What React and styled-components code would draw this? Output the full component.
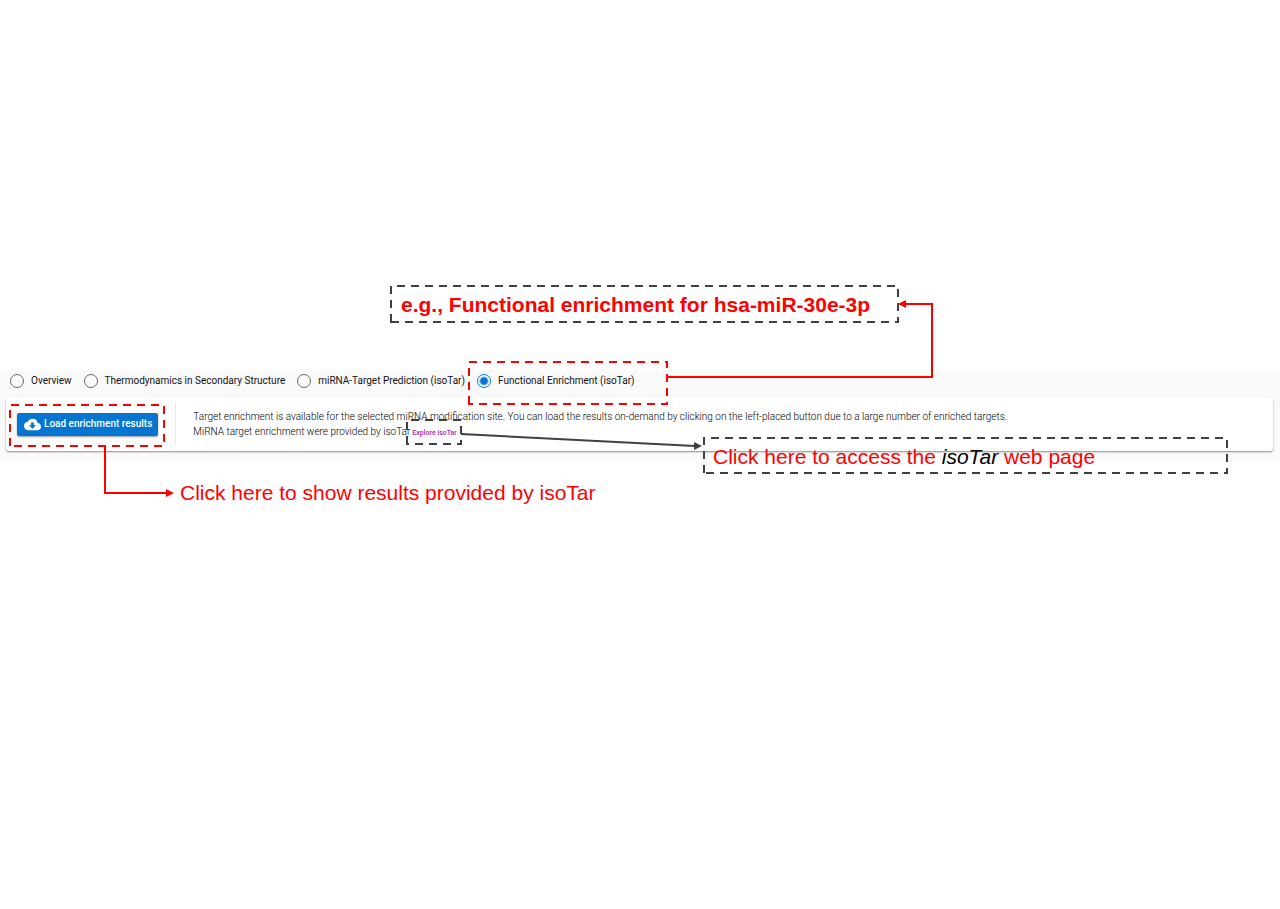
import React from 'react';
import styled, { createGlobalStyle } from 'styled-components';
import { MdCloudDownload } from 'react-icons/md';

const RED = '#ff0000';
const DARK = '#404040';

const GlobalStyle = createGlobalStyle`
  *, *::before, *::after { box-sizing: border-box; }
  body { margin: 0; background: #fff; }
`;

const Page = styled.main`
  position: relative;
  min-height: 100vh;
  padding-top: 286px;
  overflow-x: hidden;
  font-family: Roboto, 'Liberation Sans', sans-serif;
`;

const Title = styled.h1`
  margin: 0 0 46px 401px;
  font: bold 21px/38px 'Liberation Sans', Arial, sans-serif;
  color: ${RED};
  white-space: nowrap;
`;

const Panel = styled.section`
  padding: 0 7px 9px 6px;
  background: #fafafa;
`;

const Tabs = styled.fieldset`
  display: flex;
  align-items: center;
  height: 27px;
  margin: 0;
  padding: 0 0 6px 4px;
  border: 0;
  gap: 12px;
`;

const Tab = styled.label`
  display: flex;
  align-items: center;
  gap: 7px;
  font-size: 10px;
  line-height: 14px;
  color: #111;
  white-space: nowrap;
`;

const Radio = styled.input`
  appearance: none;
  width: 14px;
  height: 14px;
  margin: 0;
  border: 1px solid #666;
  border-radius: 50%;
  &:checked {
    border-color: #0575d1;
    background: radial-gradient(circle, #0575d1 3px, transparent 5px);
  }
`;

const Card = styled.div`
  display: flex;
  align-items: center;
  min-height: 54px;
  padding: 5px 11px;
  border-radius: 3px;
  background: #fff;
  box-shadow: 0 1px 2px rgba(0, 0, 0, 0.45);
`;

const LoadButton = styled.button`
  display: flex;
  align-items: center;
  gap: 3px;
  height: 23px;
  padding: 0 6px 0 7px;
  border: 0;
  border-radius: 2px;
  background: #0575d1;
  box-shadow: 0 1px 2px rgba(0, 0, 0, 0.4);
  color: #fff;
  font: 500 10px/14px Roboto, sans-serif;
  white-space: nowrap;
  svg { width: 17px; height: 17px; }
`;

const Description = styled.div`
  margin-left: 17px;
  padding: 6px 0 6px 17px;
  border-left: 1px solid #e8e8e8;
  font-size: 10px;
  font-weight: 300;
  line-height: 15px;
  color: #000;
  p { margin: 0; }
`;

const ExploreLink = styled.a`
  margin-left: 2px;
  font-size: 7px;
  font-weight: 500;
  line-height: 1;
  color: #a62bb5;
  text-decoration: none;
`;

const Note = styled.p`
  margin: 0;
  font: 21px/24px 'Liberation Sans', Arial, sans-serif;
  color: ${RED};
  white-space: nowrap;
  em { color: #000; }
`;

const ResultsNote = styled(Note)`
  margin: 21px 0 0 180px;
`;

const LinkNote = styled(Note)`
  position: absolute;
  top: 445px;
  left: 713px;
`;

const Annotations = styled.svg`
  position: absolute;
  top: 0;
  left: 0;
  pointer-events: none;
  overflow: visible;
`;

const frames = [
  { x1: 391, y1: 286, x2: 898, y2: 322, color: DARK },
  { x1: 469, y1: 362, x2: 667, y2: 404, color: RED },
  { x1: 10, y1: 405, x2: 164, y2: 446, color: RED },
  { x1: 407, y1: 420, x2: 461, y2: 444, color: DARK },
  { x1: 704, y1: 438, x2: 1227, y2: 473, color: DARK },
];

const tabs = [
  'Overview',
  'Thermodynamics in Secondary Structure',
  'miRNA-Target Prediction (isoTar)',
  'Functional Enrichment (isoTar)',
];

export default function App() {
  return (
    <Page>
      <GlobalStyle />
      <Title>e.g., Functional enrichment for hsa-miR-30e-3p</Title>
      <Panel>
        <Tabs aria-label="Analysis">
          {tabs.map((tab, i) => (
            <Tab key={tab}>
              <Radio type="radio" name="analysis" defaultChecked={i === 3} />
              {tab}
            </Tab>
          ))}
        </Tabs>
        <Card>
          <LoadButton type="button">
            <MdCloudDownload aria-hidden="true" />
            Load enrichment results
          </LoadButton>
          <Description>
            <p>
              Target enrichment is available for the selected miRNA modification site. You can load the results
              on-demand by clicking on the left-placed button due to a large number of enriched targets.
            </p>
            <p>
              MiRNA target enrichment were provided by isoTar
              <ExploreLink href="#isotar">Explore isoTar</ExploreLink>
            </p>
          </Description>
        </Card>
      </Panel>
      <ResultsNote>Click here to show results provided by isoTar</ResultsNote>
      <LinkNote>
        Click here to access the <em>isoTar</em> web page
      </LinkNote>
      <Annotations width="1240" height="520" fill="none" strokeWidth="2" aria-hidden="true">
        {frames.map((f) => (
          <path
            key={f.x1}
            d={`M${f.x1} ${f.y2}V${f.y1}H${f.x2}V${f.y2}Z`}
            stroke={f.color}
            strokeDasharray="8 6"
          />
        ))}
        <path d="M667 377H932V304H905" stroke={RED} />
        <path d="M898 304L906 300V308Z" fill={RED} />
        <path d="M105 446V493H167" stroke={RED} />
        <path d="M174 493L166 489V497Z" fill={RED} />
        <path d="M461 434L695 446" stroke={DARK} />
        <path d="M702 446L694 442V450Z" fill={DARK} />
      </Annotations>
    </Page>
  );
}
